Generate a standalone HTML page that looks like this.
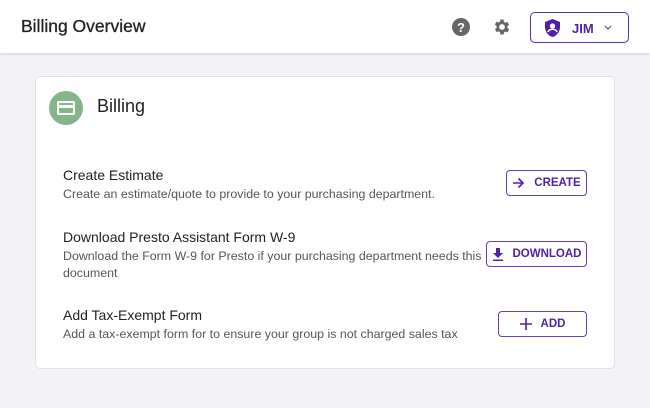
<!DOCTYPE html>
<html><head><style>
*{box-sizing:border-box;margin:0;padding:0}
body{width:650px;height:408px;background:#f3f3f7;font-family:"Liberation Sans",sans-serif;position:relative;overflow:hidden}
.top{position:absolute;left:0;top:0;width:650px;height:53px;background:#fff;box-shadow:0 1px 3px rgba(0,0,0,.15)}
.title{position:absolute;left:21px;top:16px;font-size:17.5px;color:#222;-webkit-text-stroke:0.3px #222}
.user{position:absolute;left:530px;top:12px;width:99px;height:31px;border:1.5px solid #5d2db3;border-radius:5px;color:#4f1fa8;font-weight:bold;font-size:13px}
.card{position:absolute;left:35px;top:76px;width:580px;height:293px;background:#fff;border:1px solid #e2e2e6;border-radius:5px}
.ic{position:absolute;left:13px;top:14px;width:34px;height:34px;border-radius:50%;background:#84b68a}
.ch{position:absolute;left:61px;top:19px;font-size:18px;color:#222}
.row{position:absolute;left:27px}
.row h4{font-weight:normal;font-size:14px;color:#222;margin-bottom:3px}
.row p{font-size:12.4px;color:#555;line-height:17px}
.btn{position:absolute;height:26px;border:1.5px solid #6a3bbd;border-radius:4px;color:#4f1fa8;font-size:11.5px;font-weight:bold;display:flex;align-items:center;justify-content:center;gap:9px}
</style></head><body>
<div class="top"><div class="title">Billing Overview</div>
<svg style="position:absolute;left:452px;top:18px" width="18" height="18" viewBox="0 0 18 18"><circle cx="9" cy="9" r="9" fill="#666"/><text x="9" y="14" font-size="13" font-weight="bold" fill="#fff" text-anchor="middle" font-family="Liberation Sans">?</text></svg>
<svg style="position:absolute;left:492px;top:17px" width="20" height="20" viewBox="0 0 24 24"><path fill="#666" fill-rule="evenodd" d="M19.4 13a7.5 7.5 0 000-2l2.1-1.6-2-3.5-2.5 1a7 7 0 00-1.7-1L15 3h-4l-.4 2.6a7 7 0 00-1.7 1l-2.5-1-2 3.5L6.6 11a7.5 7.5 0 000 2l-2.1 1.6 2 3.5 2.5-1a7 7 0 001.7 1L11 21h4l.4-2.6a7 7 0 001.7-1l2.5 1 2-3.5zM13 15.5a3.5 3.5 0 110-7 3.5 3.5 0 010 7z" transform="translate(-1 0)"/></svg>
<div class="user"><svg style="position:absolute;left:13px;top:6px" width="17" height="18" viewBox="0 0 17 18"><path d="M8.5 0L1 3v5c0 5 3.5 9 7.5 10 4-1 7.5-5 7.5-10V3z" fill="#4f1fa8"/><circle cx="8.5" cy="7" r="2.6" fill="#fff"/><path d="M3.8 13c1-2 3-2.8 4.7-2.8s3.7.8 4.7 2.8" stroke="#fff" stroke-width="1.5" fill="none"/></svg><span style="position:absolute;left:41px;top:8px">JIM</span><svg style="position:absolute;left:73px;top:12px" width="8" height="5" viewBox="0 0 8 5"><path d="M1 1l3 3 3-3" stroke="#555" stroke-width="1.2" fill="none"/></svg></div>
</div>
<div class="card">
<div class="ic"><svg style="position:absolute;left:8px;top:10px" width="18" height="14" viewBox="0 0 18 14"><rect x="0" y="0" width="18" height="14" rx="1.5" fill="#fff"/><rect x="2" y="2" width="14" height="2" fill="#84b68a"/><rect x="2" y="7" width="14" height="5" fill="#84b68a"/></svg></div>
<div class="ch">Billing</div>
<div class="row" style="top:90px"><h4>Create Estimate</h4><p>Create an estimate/quote to provide to your purchasing department.</p></div>
<div class="row" style="top:152px"><h4>Download Presto Assistant Form W-9</h4><p>Download the Form W-9 for Presto if your purchasing department needs this<br>document</p></div>
<div class="row" style="top:230px"><h4>Add Tax-Exempt Form</h4><p>Add a tax-exempt form for to ensure your group is not charged sales tax</p></div>
<div class="btn" style="left:470px;top:93px;width:81px"><svg width="13" height="12" viewBox="0 0 13 12"><path d="M1 6h10M6.5 1.5L11 6l-4.5 4.5" stroke="#4f1fa8" stroke-width="1.6" fill="none"/></svg>CREATE</div>
<div class="btn" style="left:450px;top:164px;width:101px"><svg width="12" height="13" viewBox="0 0 12 13"><path d="M4 0h4v5h3L6 10 1 5h3z" fill="#4f1fa8"/><rect x="1" y="11.5" width="10" height="1.5" fill="#4f1fa8"/></svg>DOWNLOAD</div>
<div class="btn" style="left:462px;top:234px;width:89px"><svg width="12" height="12" viewBox="0 0 12 12"><path d="M6 0v12M0 6h12" stroke="#4f1fa8" stroke-width="1.6"/></svg>ADD</div>
</div>
</body></html>
